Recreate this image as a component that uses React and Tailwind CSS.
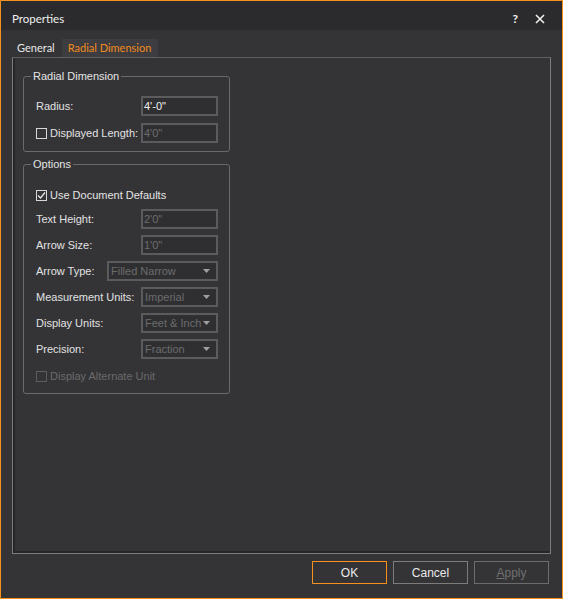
import React from "react";

const F = { fontFamily: '"Liberation Sans", Arial, sans-serif' };
const UI = { fontFamily: 'Lato, "Noto Sans", sans-serif' };

function Check({ checked, disabled }) {
  return (
    <span
      className={`inline-flex w-[11px] h-[11px] items-center justify-center border ${
        disabled ? "border-[#5c5c5c]" : "border-[#d8d8d8]"
      }`}
    >
      {checked && (
        <svg width="9" height="9" viewBox="0 0 9 9">
          <path d="M1 4.5 L3.5 7 L8 1.5" fill="none" stroke="#e8e8e8" strokeWidth="1.3" />
        </svg>
      )}
    </span>
  );
}

function Input({ value, disabled, w = "w-[77px]" }) {
  return (
    <div
      className={`${w} h-[20px] border-2 border-[#5b5b5e] bg-[#2f2f32] flex items-center pl-[1px] text-[11px] ${
        disabled ? "text-[#6c6c6c]" : "text-[#f0f0f0]"
      }`}
    >
      {value}
    </div>
  );
}

function Select({ value, w = "w-[77px]" }) {
  return (
    <div
      className={`${w} h-[20px] border-2 border-[#5b5b5e] bg-[#2f2f32] flex items-center pl-[2px] pr-[6px] text-[11px] text-[#6c6c6c]`}
    >
      <span className="flex-1 min-w-0 whitespace-nowrap overflow-hidden">{value}</span>
      <svg width="7" height="4" viewBox="0 0 7 4" className="shrink-0 ml-[2px]">
        <path d="M0 0 H7 L3.5 4 Z" fill="#a0a0a0" />
      </svg>
    </div>
  );
}

function Row({ label, children, className = "" }) {
  return (
    <div className={`flex items-center justify-between h-[20px] ${className}`}>
      <span className="text-[11px] text-[#e2e2e2] whitespace-nowrap">{label}</span>
      {children}
    </div>
  );
}

function Group({ title, children, className = "" }) {
  return (
    <fieldset
      className={`w-[207px] min-w-0 border border-[#6a6a6d] rounded-[3px] px-[11px] ${className}`}
    >
      <legend className="-ml-[4px] px-[2px] text-[11px] leading-[14px] text-[#e4e4e4]">{title}</legend>
      {children}
    </fieldset>
  );
}

export default function App() {
  return (
    <div
      className="w-[563px] h-[599px] border border-[#f7901e] bg-[#343437] flex flex-col"
      style={F}
    >
      <div className="h-[29px] bg-[#2b2b2d] flex items-center pt-[7px] pl-[11px] pr-[17px] text-[#f0f0f0]">
        <span className="text-[11.5px] flex-1" style={UI}>
          Properties
        </span>
        <span className="text-[12px] font-bold mr-[17px]" style={UI}>
          ?
        </span>
        <svg width="10" height="10" viewBox="0 0 10 10">
          <path d="M1 1 L9 9 M9 1 L1 9" stroke="#f0f0f0" strokeWidth="1.6" />
        </svg>
      </div>

      <div className="h-[27px] flex items-end pl-[10px] text-[11px]" style={UI}>
        <div className="h-[18px] pl-[6px] pr-[7px] flex items-center text-[#e8e8e8]">General</div>
        <div className="h-[18px] pl-[6px] pr-[7px] flex items-center bg-[#3d3d41] text-[#f08a1c]">
          Radial Dimension
        </div>
      </div>

      <div className="ml-[11px] w-[539px] h-[497px] border border-[#7c7c7c] border-t-[#5f5f62]">
        <div className="h-full border-l-2 border-b-2 border-[#262628] pl-[8px] pt-[11px]">
          <Group title="Radial Dimension" className="pb-[8px]">
            <Row label={<span className="pl-[1px]">Radius:</span>} className="mt-[13px]">
              <Input value={`4'-0"`} />
            </Row>
            <Row
              label={
                <span className="flex items-center gap-[3px] pl-[1px]">
                  <Check />
                  Displayed Length:
                </span>
              }
              className="mt-[7px]"
            >
              <Input value={`4'0"`} disabled />
            </Row>
          </Group>

          <Group title="Options" className="mt-[5px] pb-[10px]">
            <div className="flex items-center gap-[3px] pl-[1px] mt-[17px] h-[14px] text-[11px] text-[#e4e4e4]">
              <Check checked />
              Use Document Defaults
            </div>
            <Row label={<span className="pl-[1px]">Text Height:</span>} className="mt-[7px]">
              <Input value={`2'0"`} disabled />
            </Row>
            <Row label={<span className="pl-[1px]">Arrow Size:</span>} className="mt-[6px]">
              <Input value={`1'0"`} disabled />
            </Row>
            <Row label={<span className="pl-[1px]">Arrow Type:</span>} className="mt-[6px]">
              <Select value="Filled Narrow" w="w-[111px]" />
            </Row>
            <Row label={<span className="pl-[1px]">Measurement Units:</span>} className="mt-[6px]">
              <Select value="Imperial" />
            </Row>
            <Row label={<span className="pl-[1px]">Display Units:</span>} className="mt-[6px]">
              <Select value="Feet & Inch" />
            </Row>
            <Row label={<span className="pl-[1px]">Precision:</span>} className="mt-[6px]">
              <Select value="Fraction" />
            </Row>
            <div className="flex items-center gap-[3px] pl-[1px] mt-[10px] h-[14px] text-[11px] text-[#6a6a6a]">
              <Check disabled />
              Display Alternate Unit
            </div>
          </Group>
        </div>
      </div>

      <div className="flex justify-end gap-[6px] pr-[13px] mt-[7px] text-[12px]">
        <button className="w-[75px] h-[23px] border border-[#f7901e] text-[#eaeaea]">OK</button>
        <button className="w-[75px] h-[23px] border border-[#7c7c7c] text-[#eaeaea]">Cancel</button>
        <button className="w-[75px] h-[23px] border border-[#6c6c6c] text-[#6f6f6f]">
          <span className="underline">A</span>pply
        </button>
      </div>
    </div>
  );
}
